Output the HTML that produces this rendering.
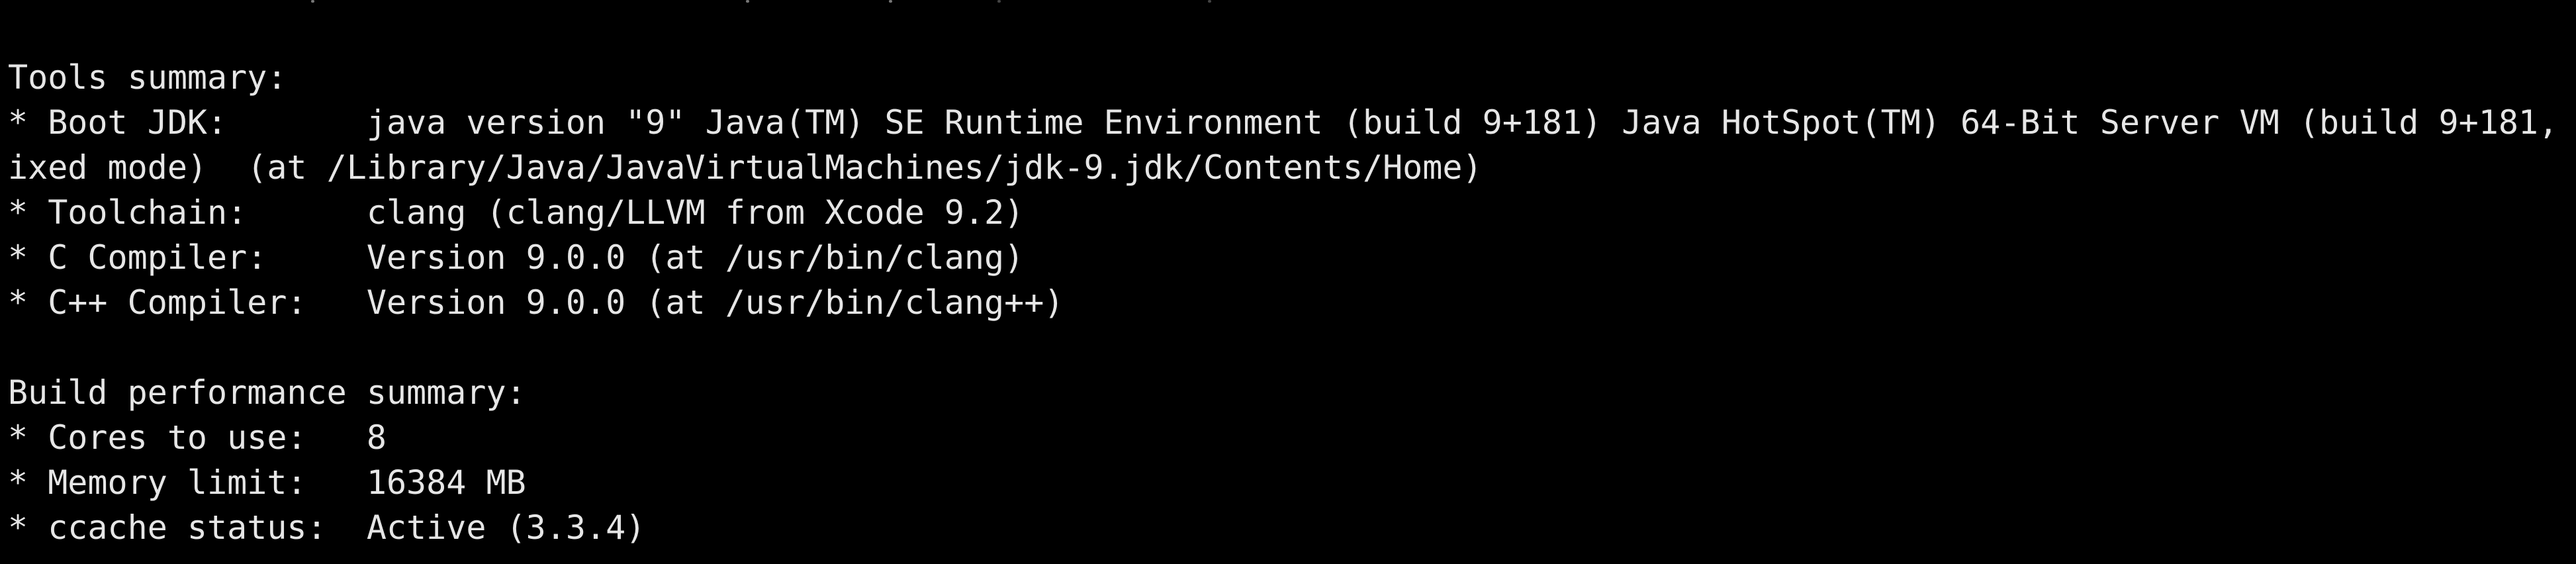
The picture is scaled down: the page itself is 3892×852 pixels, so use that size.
<!DOCTYPE html>
<html><head><meta charset="utf-8"><style>
html,body{margin:0;padding:0;background:#000;width:3892px;height:852px;overflow:hidden}
pre{position:absolute;left:12px;top:83px;margin:0;font-family:"DejaVu Sans Mono","Liberation Mono",monospace;font-size:50px;line-height:68px;color:#e6e6e6;white-space:pre}
.d{position:absolute;top:0;width:5px;height:4px;border-radius:2px;background:#777}
</style></head><body>
<div class="d" style="left:470px"></div>
<div class="d" style="left:1127px"></div>
<div class="d" style="left:1343px"></div>
<div class="d" style="left:1507px;background:#444"></div>
<div class="d" style="left:1825px;background:#444"></div>
<pre>Tools summary:
* Boot JDK:       java version "9" Java(TM) SE Runtime Environment (build 9+181) Java HotSpot(TM) 64-Bit Server VM (build 9+181,
ixed mode)  (at /Library/Java/JavaVirtualMachines/jdk-9.jdk/Contents/Home)
* Toolchain:      clang (clang/LLVM from Xcode 9.2)
* C Compiler:     Version 9.0.0 (at /usr/bin/clang)
* C++ Compiler:   Version 9.0.0 (at /usr/bin/clang++)

Build performance summary:
* Cores to use:   8
* Memory limit:   16384 MB
* ccache status:  Active (3.3.4)</pre>
</body></html>
